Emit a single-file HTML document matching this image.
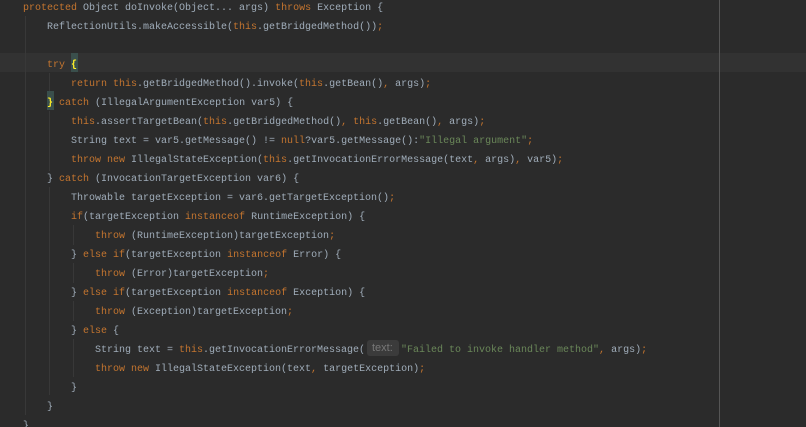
<!DOCTYPE html>
<html><head><meta charset="utf-8"><style>
html,body{margin:0;padding:0;background:#2b2b2b;width:806px;height:427px;overflow:hidden}
#r{position:relative;width:806px;height:427px;overflow:hidden;font:10px/19px "Liberation Mono",monospace;color:#a0adba}
.l{position:absolute;white-space:pre;height:19px}
.k{color:#c4752f}.s{color:#6a8759}
.g{position:absolute;width:1px;background:#383838}
.b{position:absolute;background:#3a4f4c;width:7px;height:19px}
.y{color:#ffef28;font-weight:bold}
#t{position:absolute;left:0;top:1px;width:806px;height:427px}
</style></head><body><div id="r">
<div style="position:absolute;left:0;top:53px;width:806px;height:19px;background:#323232"></div>
<div style="position:absolute;left:719px;top:0;width:1px;height:427px;background:#555"></div>
<div class="g" style="left:25px;top:16px;height:399px"></div>
<div class="g" style="left:49px;top:73px;height:20px"></div>
<div class="g" style="left:49px;top:111px;height:60px"></div>
<div class="g" style="left:49px;top:187px;height:208px"></div>
<div class="g" style="left:73px;top:225px;height:20px"></div>
<div class="g" style="left:73px;top:263px;height:20px"></div>
<div class="g" style="left:73px;top:301px;height:20px"></div>
<div class="g" style="left:73px;top:339px;height:38px"></div>
<div class="b" style="left:71px;top:53px"></div>
<div class="b" style="left:47px;top:91px"></div>
<div style="position:absolute;left:367px;top:340px;width:32px;height:16px;background:#3b3b3b;border-radius:3px"></div>
<div id="t">
<div class="l" style="left:23px;top:-2px"><span class="k">protected</span> Object doInvoke(Object... args) <span class="k">throws</span> Exception {</div>
<div class="l" style="left:47px;top:17px">ReflectionUtils.makeAccessible(<span class="k">this</span>.getBridgedMethod())<span class="k">;</span></div>
<div class="l" style="left:47px;top:55px"><span class="k">try</span> <span class="y">{</span></div>
<div class="l" style="left:71px;top:74px"><span class="k">return this</span>.getBridgedMethod().invoke(<span class="k">this</span>.getBean()<span class="k">,</span> args)<span class="k">;</span></div>
<div class="l" style="left:47px;top:93px"><span class="y">}</span> <span class="k">catch</span> (IllegalArgumentException var5) {</div>
<div class="l" style="left:71px;top:112px"><span class="k">this</span>.assertTargetBean(<span class="k">this</span>.getBridgedMethod()<span class="k">,</span> <span class="k">this</span>.getBean()<span class="k">,</span> args)<span class="k">;</span></div>
<div class="l" style="left:71px;top:131px">String text = var5.getMessage() != <span class="k">null</span>?var5.getMessage():<span class="s">"Illegal argument"</span><span class="k">;</span></div>
<div class="l" style="left:71px;top:150px"><span class="k">throw new</span> IllegalStateException(<span class="k">this</span>.getInvocationErrorMessage(text<span class="k">,</span> args)<span class="k">,</span> var5)<span class="k">;</span></div>
<div class="l" style="left:47px;top:169px">} <span class="k">catch</span> (InvocationTargetException var6) {</div>
<div class="l" style="left:71px;top:188px">Throwable targetException = var6.getTargetException()<span class="k">;</span></div>
<div class="l" style="left:71px;top:207px"><span class="k">if</span>(targetException <span class="k">instanceof</span> RuntimeException) {</div>
<div class="l" style="left:95px;top:226px"><span class="k">throw</span> (RuntimeException)targetException<span class="k">;</span></div>
<div class="l" style="left:71px;top:245px">} <span class="k">else if</span>(targetException <span class="k">instanceof</span> Error) {</div>
<div class="l" style="left:95px;top:264px"><span class="k">throw</span> (Error)targetException<span class="k">;</span></div>
<div class="l" style="left:71px;top:283px">} <span class="k">else if</span>(targetException <span class="k">instanceof</span> Exception) {</div>
<div class="l" style="left:95px;top:302px"><span class="k">throw</span> (Exception)targetException<span class="k">;</span></div>
<div class="l" style="left:71px;top:321px">} <span class="k">else</span> {</div>
<div class="l" style="left:95px;top:340px">String text = <span class="k">this</span>.getInvocationErrorMessage(</div>
<div class="l" style="left:372px;top:338px;color:#787878;font-family:'Liberation Sans',sans-serif;font-size:11px">text:</div>
<div class="l" style="left:401px;top:340px"><span class="s">"Failed to invoke handler method"</span><span class="k">,</span> args)<span class="k">;</span></div>
<div class="l" style="left:95px;top:359px"><span class="k">throw new</span> IllegalStateException(text<span class="k">,</span> targetException)<span class="k">;</span></div>
<div class="l" style="left:71px;top:378px">}</div>
<div class="l" style="left:47px;top:397px">}</div>
<div class="l" style="left:23px;top:416px">}</div>
</div>
</div></body></html>
